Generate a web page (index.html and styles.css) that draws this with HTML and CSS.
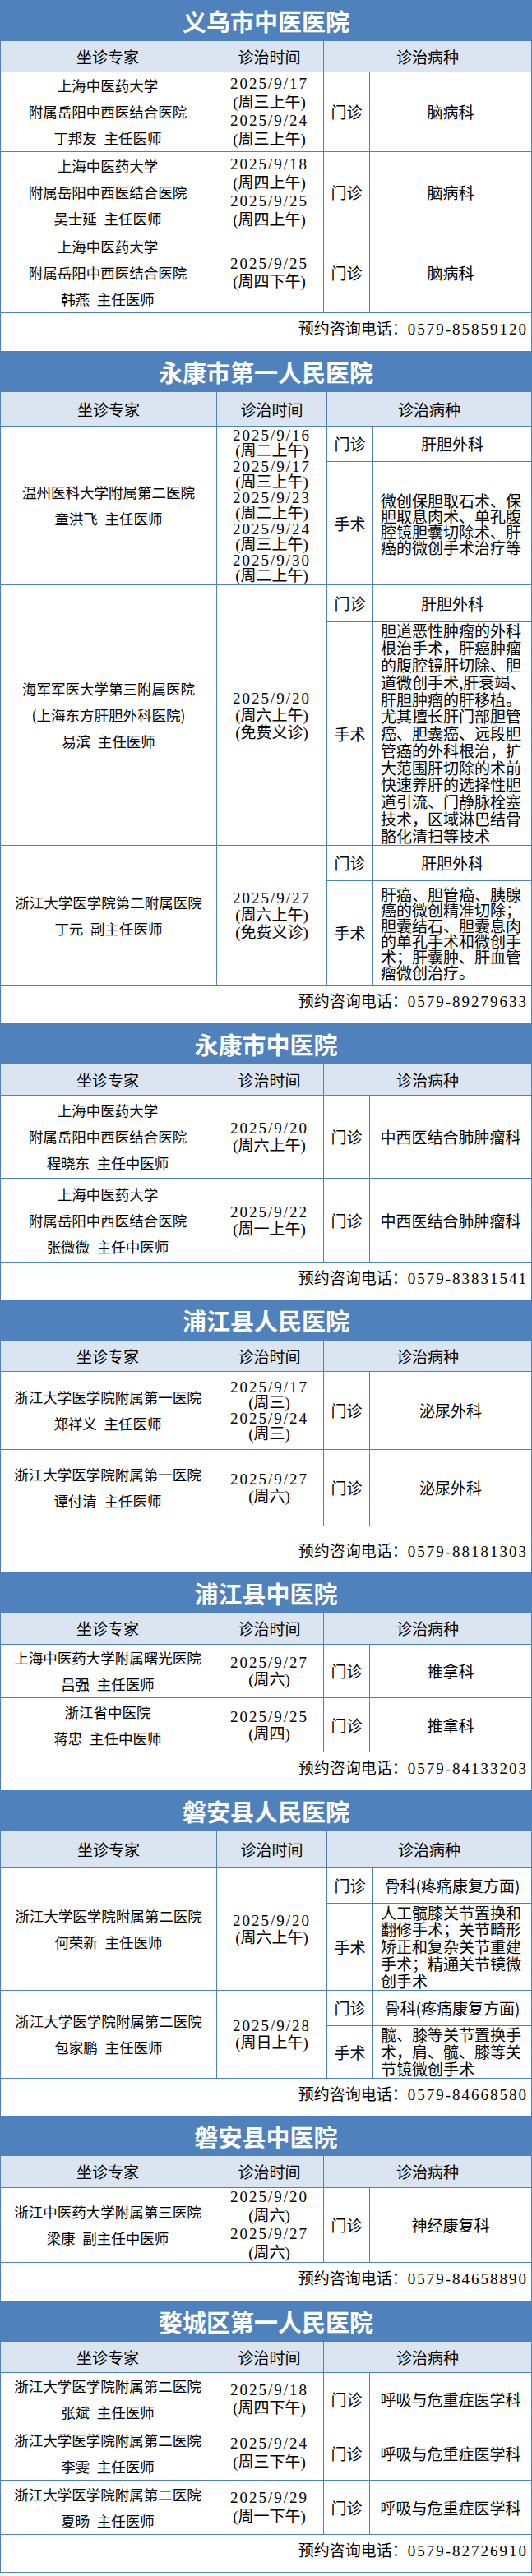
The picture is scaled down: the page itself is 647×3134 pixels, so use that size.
FILE: index.html
```html
<!DOCTYPE html>
<html lang="zh-CN">
<head>
<meta charset="utf-8">
<title>专家坐诊安排</title>
<link rel="stylesheet" href="styles.css">
</head>
<body>
<main class="board">

<section class="hosp">
<h2 class="hosp-title t50">义乌市中医医院</h2>
<table class="sched">
<colgroup><col class="c1"><col class="c2"><col class="c3"><col class="c4"></colgroup>
<thead><tr class="h38"><th>坐诊专家</th><th>诊治时间</th><th colspan="2">诊治病种</th></tr></thead>
<tbody>
<tr class="h97"><td class="exp">上海中医药大学<br>附属岳阳中西医结合医院<br>丁邦友&ensp;主任医师</td><td class="time loose"><span class="dt">2025/9/17</span><br>(周三上午)<br><span class="dt">2025/9/24</span><br>(周三上午)</td><td class="type">门诊</td><td class="dept">脑病科</td></tr>
<tr class="h99"><td class="exp">上海中医药大学<br>附属岳阳中西医结合医院<br>吴士延&ensp;主任医师</td><td class="time loose"><span class="dt">2025/9/18</span><br>(周四上午)<br><span class="dt">2025/9/25</span><br>(周四上午)</td><td class="type">门诊</td><td class="dept">脑病科</td></tr>
<tr class="h97"><td class="exp">上海中医药大学<br>附属岳阳中西医结合医院<br>韩燕&ensp;主任医师</td><td class="time loose"><span class="dt">2025/9/25</span><br>(周四下午)</td><td class="type">门诊</td><td class="dept">脑病科</td></tr>
</tbody>
<tfoot><tr class="h47"><td colspan="4" class="phone">预约咨询电话：<span class="dt">0579-85859120</span></td></tr></tfoot>
</table>
</section>

<section class="hosp">
<h2 class="hosp-title">永康市第一人民医院</h2>
<table class="sched sched--surg">
<colgroup><col class="c1"><col class="c2"><col class="c3"><col class="c4"></colgroup>
<thead><tr class="h42"><th>坐诊专家</th><th>诊治时间</th><th colspan="2">诊治病种</th></tr></thead>
<tbody>
<tr class="h43"><td class="exp" rowspan="2">温州医科大学附属第二医院<br>童洪飞&ensp;主任医师</td><td class="time tight" rowspan="2"><span class="dt">2025/9/16</span><br>(周二上午)<br><span class="dt">2025/9/17</span><br>(周三上午)<br><span class="dt">2025/9/23</span><br>(周二上午)<br><span class="dt">2025/9/24</span><br>(周三上午)<br><span class="dt">2025/9/30</span><br>(周二上午)</td><td class="type">门诊</td><td class="dept">肝胆外科</td></tr>
<tr class="h150"><td class="type">手术</td><td class="desc">微创保胆取石术、保胆取息肉术、单孔腹腔镜胆囊切除术、肝癌的微创手术治疗等</td></tr>
<tr class="h45"><td class="exp" rowspan="2">海军军医大学第三附属医院<br>(上海东方肝胆外科医院)<br>易滨&ensp;主任医师</td><td class="time" rowspan="2"><span class="dt">2025/9/20</span><br>(周六上午)<br>(免费义诊)</td><td class="type">门诊</td><td class="dept">肝胆外科</td></tr>
<tr class="h272"><td class="type">手术</td><td class="desc desc--loose">胆道恶性肿瘤的外科根治手术，肝癌肿瘤的腹腔镜肝切除、胆道微创手术,肝衰竭、肝胆肿瘤的肝移植。尤其擅长肝门部胆管癌、胆囊癌、远段胆管癌的外科根治，扩大范围肝切除的术前快速养肝的选择性胆道引流、门静脉栓塞技术，区域淋巴结骨骼化清扫等技术</td></tr>
<tr class="h43"><td class="exp" rowspan="2">浙江大学医学院第二附属医院<br>丁元&ensp;副主任医师</td><td class="time" rowspan="2"><span class="dt">2025/9/27</span><br>(周六上午)<br>(免费义诊)</td><td class="type">门诊</td><td class="dept">肝胆外科</td></tr>
<tr class="h127"><td class="type">手术</td><td class="desc">肝癌、胆管癌、胰腺癌的微创精准切除；胆囊结石、胆囊息肉的单孔手术和微创手术；肝囊肿、肝血管瘤微创治疗。</td></tr>
</tbody>
<tfoot><tr class="h47"><td colspan="4" class="phone">预约咨询电话：<span class="dt">0579-89279633</span></td></tr></tfoot>
</table>
</section>

<section class="hosp">
<h2 class="hosp-title">永康市中医院</h2>
<table class="sched">
<colgroup><col class="c1"><col class="c2"><col class="c3"><col class="c4"></colgroup>
<thead><tr class="h38"><th>坐诊专家</th><th>诊治时间</th><th colspan="2">诊治病种</th></tr></thead>
<tbody>
<tr class="h101"><td class="exp">上海中医药大学<br>附属岳阳中西医结合医院<br>程晓东&ensp;主任中医师</td><td class="time"><span class="dt">2025/9/20</span><br>(周六上午)</td><td class="type">门诊</td><td class="dept">中西医结合肺肿瘤科</td></tr>
<tr class="h102"><td class="exp">上海中医药大学<br>附属岳阳中西医结合医院<br>张微微&ensp;主任中医师</td><td class="time"><span class="dt">2025/9/22</span><br>(周一上午)</td><td class="type">门诊</td><td class="dept">中西医结合肺肿瘤科</td></tr>
</tbody>
<tfoot><tr class="h46"><td colspan="4" class="phone">预约咨询电话：<span class="dt">0579-83831541</span></td></tr></tfoot>
</table>
</section>

<section class="hosp">
<h2 class="hosp-title">浦江县人民医院</h2>
<table class="sched">
<colgroup><col class="c1"><col class="c2"><col class="c3"><col class="c4"></colgroup>
<thead><tr class="h38"><th>坐诊专家</th><th>诊治时间</th><th colspan="2">诊治病种</th></tr></thead>
<tbody>
<tr class="h95"><td class="exp">浙江大学医学院附属第一医院<br>郑祥义&ensp;主任医师</td><td class="time tight"><span class="dt">2025/9/17</span><br>(周三)<br><span class="dt">2025/9/24</span><br>(周三)</td><td class="type">门诊</td><td class="dept">泌尿外科</td></tr>
<tr class="h93"><td class="exp">浙江大学医学院附属第一医院<br>谭付清&ensp;主任医师</td><td class="time"><span class="dt">2025/9/27</span><br>(周六)</td><td class="type">门诊</td><td class="dept">泌尿外科</td></tr>
</tbody>
<tfoot><tr class="h57"><td colspan="4" class="phone phone--mid">预约咨询电话：<span class="dt">0579-88181303</span></td></tr></tfoot>
</table>
</section>

<section class="hosp">
<h2 class="hosp-title t48">浦江县中医院</h2>
<table class="sched">
<colgroup><col class="c1"><col class="c2"><col class="c3"><col class="c4"></colgroup>
<thead><tr class="h39"><th>坐诊专家</th><th>诊治时间</th><th colspan="2">诊治病种</th></tr></thead>
<tbody>
<tr class="h65"><td class="exp">上海中医药大学附属曙光医院<br>吕强&ensp;主任医师</td><td class="time"><span class="dt">2025/9/27</span><br>(周六)</td><td class="type">门诊</td><td class="dept">推拿科</td></tr>
<tr class="h66"><td class="exp">浙江省中医院<br>蒋忠&ensp;主任中医师</td><td class="time"><span class="dt">2025/9/25</span><br>(周四)</td><td class="type">门诊</td><td class="dept">推拿科</td></tr>
</tbody>
<tfoot><tr class="h47"><td colspan="4" class="phone">预约咨询电话：<span class="dt">0579-84133203</span></td></tr></tfoot>
</table>
</section>

<section class="hosp">
<h2 class="hosp-title">磐安县人民医院</h2>
<table class="sched sched--surg">
<colgroup><col class="c1"><col class="c2"><col class="c3"><col class="c4"></colgroup>
<thead><tr class="h45"><th>坐诊专家</th><th>诊治时间</th><th colspan="2">诊治病种</th></tr></thead>
<tbody>
<tr class="h43"><td class="exp" rowspan="2">浙江大学医学院附属第二医院<br>何荣新&ensp;主任医师</td><td class="time" rowspan="2"><span class="dt">2025/9/20</span><br>(周六上午)</td><td class="type">门诊</td><td class="dept">骨科(疼痛康复方面)</td></tr>
<tr class="h106"><td class="type">手术</td><td class="desc desc--loose">人工髋膝关节置换和翻修手术；关节畸形矫正和复杂关节重建手术；精通关节镜微创手术</td></tr>
<tr class="h43"><td class="exp" rowspan="2">浙江大学医学院附属第二医院<br>包家鹏&ensp;主任医师</td><td class="time" rowspan="2"><span class="dt">2025/9/28</span><br>(周日上午)</td><td class="type">门诊</td><td class="dept">骨科(疼痛康复方面)</td></tr>
<tr class="h64"><td class="type">手术</td><td class="desc desc--loose">髋、膝等关节置换手术，肩、髋、膝等关节镜微创手术</td></tr>
</tbody>
<tfoot><tr class="h46"><td colspan="4" class="phone">预约咨询电话：<span class="dt">0579-84668580</span></td></tr></tfoot>
</table>
</section>

<section class="hosp">
<h2 class="hosp-title t48">磐安县中医院</h2>
<table class="sched">
<colgroup><col class="c1"><col class="c2"><col class="c3"><col class="c4"></colgroup>
<thead><tr class="h39"><th>坐诊专家</th><th>诊治时间</th><th colspan="2">诊治病种</th></tr></thead>
<tbody>
<tr class="h91"><td class="exp">浙江中医药大学附属第三医院<br>梁康&ensp;副主任中医师</td><td class="time loose"><span class="dt">2025/9/20</span><br>(周六)<br><span class="dt">2025/9/27</span><br>(周六)</td><td class="type">门诊</td><td class="dept">神经康复科</td></tr>
</tbody>
<tfoot><tr class="h47"><td colspan="4" class="phone">预约咨询电话：<span class="dt">0579-84658890</span></td></tr></tfoot>
</table>
</section>

<section class="hosp">
<h2 class="hosp-title">婺城区第一人民医院</h2>
<table class="sched">
<colgroup><col class="c1"><col class="c2"><col class="c3"><col class="c4"></colgroup>
<thead><tr class="h38"><th>坐诊专家</th><th>诊治时间</th><th colspan="2">诊治病种</th></tr></thead>
<tbody>
<tr class="h65"><td class="exp">浙江大学医学院附属第二医院<br>张斌&ensp;主任医师</td><td class="time loose"><span class="dt">2025/9/18</span><br>(周四下午)</td><td class="type">门诊</td><td class="dept">呼吸与危重症医学科</td></tr>
<tr class="h66"><td class="exp">浙江大学医学院附属第二医院<br>李雯&ensp;主任医师</td><td class="time loose"><span class="dt">2025/9/24</span><br>(周三下午)</td><td class="type">门诊</td><td class="dept">呼吸与危重症医学科</td></tr>
<tr class="h66"><td class="exp">浙江大学医学院附属第二医院<br>夏旸&ensp;主任医师</td><td class="time loose"><span class="dt">2025/9/29</span><br>(周一下午)</td><td class="type">门诊</td><td class="dept">呼吸与危重症医学科</td></tr>
</tbody>
<tfoot><tr class="h46"><td colspan="4" class="phone">预约咨询电话：<span class="dt">0579-82726910</span></td></tr></tfoot>
</table>
</section>

</main>
</body>
</html>
```

FILE: styles.css
```css
* {
  box-sizing: border-box;
}

html, body {
  margin: 0;
  padding: 0;
  background: #ffffff;
}

body {
  font-family: "Noto Sans CJK SC", sans-serif;
  color: #000000;
}

.board {
  width: 647px;
}

.hosp {
  margin: 0;
}

.hosp-title {
  margin: 0;
  height: 49px;
  line-height: 49px;
  background: #4f81bd;
  color: #ffffff;
  font-size: 29px;
  font-weight: 700;
  text-align: center;
  letter-spacing: 0;
}

.hosp-title.t50 { height: 50px; line-height: 50px; }
.hosp-title.t48 { height: 48px; line-height: 48px; }

.sched {
  width: 647px;
  table-layout: fixed;
  border-collapse: separate;
  border-spacing: 0;
  border-left: 1px solid #4f81bd;
}

.sched .c1 { width: 261px; }
.sched .c2 { width: 132px; }
.sched .c3 { width: 56px; }
.sched .c4 { width: 197px; }

.sched--surg .c1 { width: 263px; }
.sched--surg .c2 { width: 134px; }
.sched--surg .c3 { width: 56px; }
.sched--surg .c4 { width: 193px; }

.sched th,
.sched td {
  padding: 0;
  border-right: 1px solid #4f81bd;
  border-bottom: 1px solid #4f81bd;
  text-align: center;
  vertical-align: middle;
}

.sched th {
  background: #dbe5f1;
  font-weight: 400;
  font-size: 19px;
  line-height: 24px;
}

/* row heights */
.h38 { height: 38px; }
.h39 { height: 39px; }
.h42 { height: 42px; }
.h43 { height: 43px; }
.h45 { height: 45px; }
.h46 { height: 46px; }
.h47 { height: 47px; }
.h57 { height: 57px; }
.h64 { height: 64px; }
.h65 { height: 65px; }
.h66 { height: 66px; }
.h91 { height: 91px; }
.h93 { height: 93px; }
.h95 { height: 95px; }
.h97 { height: 97px; }
.h99 { height: 99px; }
.h101 { height: 101px; }
.h102 { height: 102px; }
.h106 { height: 106px; }
.h127 { height: 127px; }
.h150 { height: 150px; }
.h272 { height: 272px; }

.exp {
  font-size: 17.5px;
  line-height: 32px;
  white-space: nowrap;
}

.time {
  font-family: "Liberation Serif", "Noto Sans CJK SC", serif;
  font-size: 19px;
  line-height: 21px;
  white-space: nowrap;
}

.time.tight { line-height: 19px; }
.time.loose { line-height: 22.5px; }

.dt {
  letter-spacing: 2px;
}

.type {
  font-size: 19px;
  line-height: 24px;
}

.dept {
  font-size: 19px;
  line-height: 24px;
}

.sched td.desc {
  text-align: left;
  padding: 0 5px 0 9px;
  font-size: 19px;
  line-height: 19px;
}

.sched td.desc--loose {
  line-height: 20.8px;
}

.sched td.phone {
  text-align: right;
  vertical-align: top;
  padding: 6px 4px 0 0;
  font-family: "Noto Sans CJK SC", sans-serif;
  font-size: 19px;
  line-height: 24px;
}

.phone .dt {
  font-family: "Liberation Serif", serif;
}

.sched td.phone--mid {
  padding-top: 17px;
}
```
